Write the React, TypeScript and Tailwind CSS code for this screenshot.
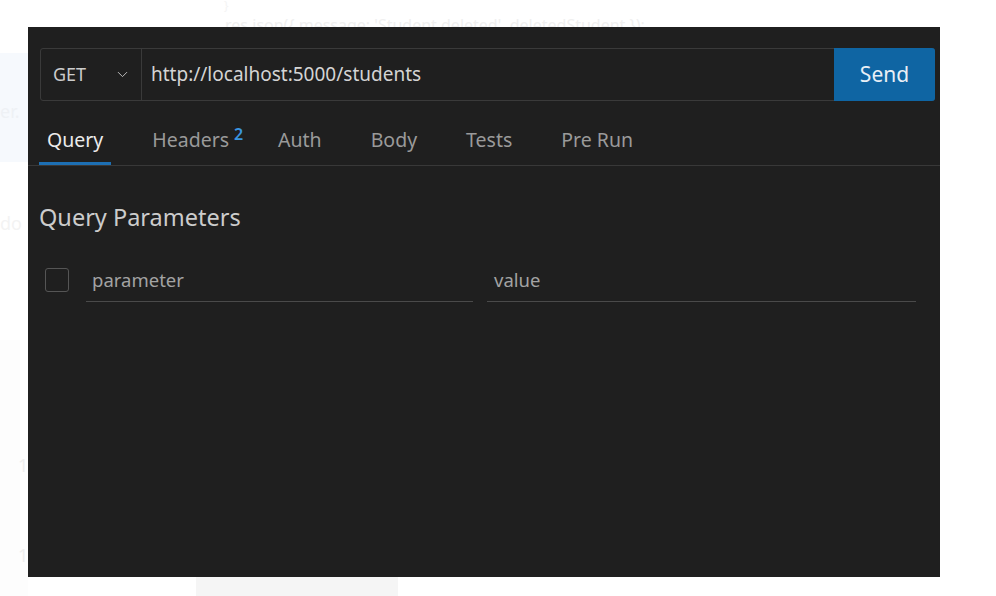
import { ChevronDown } from "lucide-react";

const tabs = ["Query", "Headers", "Auth", "Body", "Tests", "Pre Run"];

export default function App() {
  return (
    <div
      className="relative h-[596px] w-[996px] overflow-hidden bg-white"
      style={{ fontFamily: '"Noto Sans", "Open Sans", sans-serif' }}
    >
      {/* faint editor content behind the panel */}
      <div className="absolute left-[224px] top-0 text-[12px] leading-[12px] text-[#f4f4f4]">{"}"}</div>
      <div className="absolute left-[225px] top-[17px] whitespace-nowrap text-[16px] leading-[16px] text-[#f0f0f0]">
        res.json({"{"} message: 'Student deleted', deletedStudent {"}"});
      </div>
      <div className="absolute left-0 top-[53px] h-[109px] w-[28px] bg-[#f6f9fd]" />
      <div className="absolute left-0 top-[98px] text-[18px] text-[#eef1f5]">er.</div>
      <div className="absolute left-0 top-[210px] text-[18px] text-[#f3f3f3]">do</div>
      <div className="absolute left-0 top-[340px] h-[256px] w-[28px] bg-[#fdfdfd]" />
      <div className="absolute left-[18px] top-[452px] text-[18px] text-[#eeeeee]">1</div>
      <div className="absolute left-[18px] top-[542px] text-[18px] text-[#eeeeee]">1</div>
      <div className="absolute left-[196px] top-[577px] h-[19px] w-[202px] bg-[#f5f5f5]" />

      {/* request panel */}
      <div className="relative z-10 ml-[28px] mt-[27px] flex h-[550px] w-[912px] flex-col bg-[#1f1f1f] pt-[21px]">
        <div className="ml-[12px] mr-[5px] flex h-[53px] rounded-[3px] border border-[#3a3a3a]">
          <div className="flex w-[101px] items-center justify-between border-r border-[#3a3a3a] pl-[12px] pr-[10px] text-[18px] text-[#cccccc]">
            <span>GET</span>
            <ChevronDown size={17} strokeWidth={1.4} className="text-[#bbbbbb]" />
          </div>
          <div className="flex flex-1 items-center pl-[9px] text-[19px] text-[#d4d4d4]">
            http://localhost:5000/students
          </div>
          <button className="-my-px -mr-px w-[101px] rounded-r-[3px] bg-[#0f65a3] text-[21px] text-[#e9eff6]">
            Send
          </button>
        </div>

        <div className="flex h-[65px] items-end gap-[33px] border-b border-[#383838] pl-[11px]">
          {tabs.map((t, i) => (
            <div
              key={t}
              className={
                i === 0
                  ? "relative flex h-[38px] items-start border-b-[3px] border-[#1d6fb3] px-2 text-[19.5px] leading-[26px] text-[#ececec]"
                  : "relative flex h-[38px] items-start border-b-[3px] border-transparent px-2 text-[19.5px] leading-[26px] text-[#9a9a9a]"
              }
            >
              {t}
              {t === "Headers" && (
                <span className="absolute right-[-6px] top-[-1px] text-[16px] font-semibold leading-[16px] text-[#3a95e0]">2</span>
              )}
            </div>
          ))}
        </div>

        <div className="pl-[11px] pr-[24px]">
          <div className="mt-[35px] text-[23.5px] leading-[32px] text-[#cccccc]">Query Parameters</div>
          <div className="mt-[26px] flex items-start">
            <div className="ml-[6px] mr-[17px] mt-[9px] h-[24px] w-[24px] rounded-[3px] border-[1.5px] border-[#555555]" />
            <div className="flex h-[43px] flex-1 items-center border-b border-[#4a4a4a] pl-[6px] text-[18.5px] text-[#a3a3a3]">
              parameter
            </div>
            <div className="ml-[14px] flex h-[43px] w-[429px] items-center border-b border-[#4a4a4a] pl-[7px] text-[18.5px] text-[#a3a3a3]">
              value
            </div>
          </div>
        </div>
      </div>
    </div>
  );
}
